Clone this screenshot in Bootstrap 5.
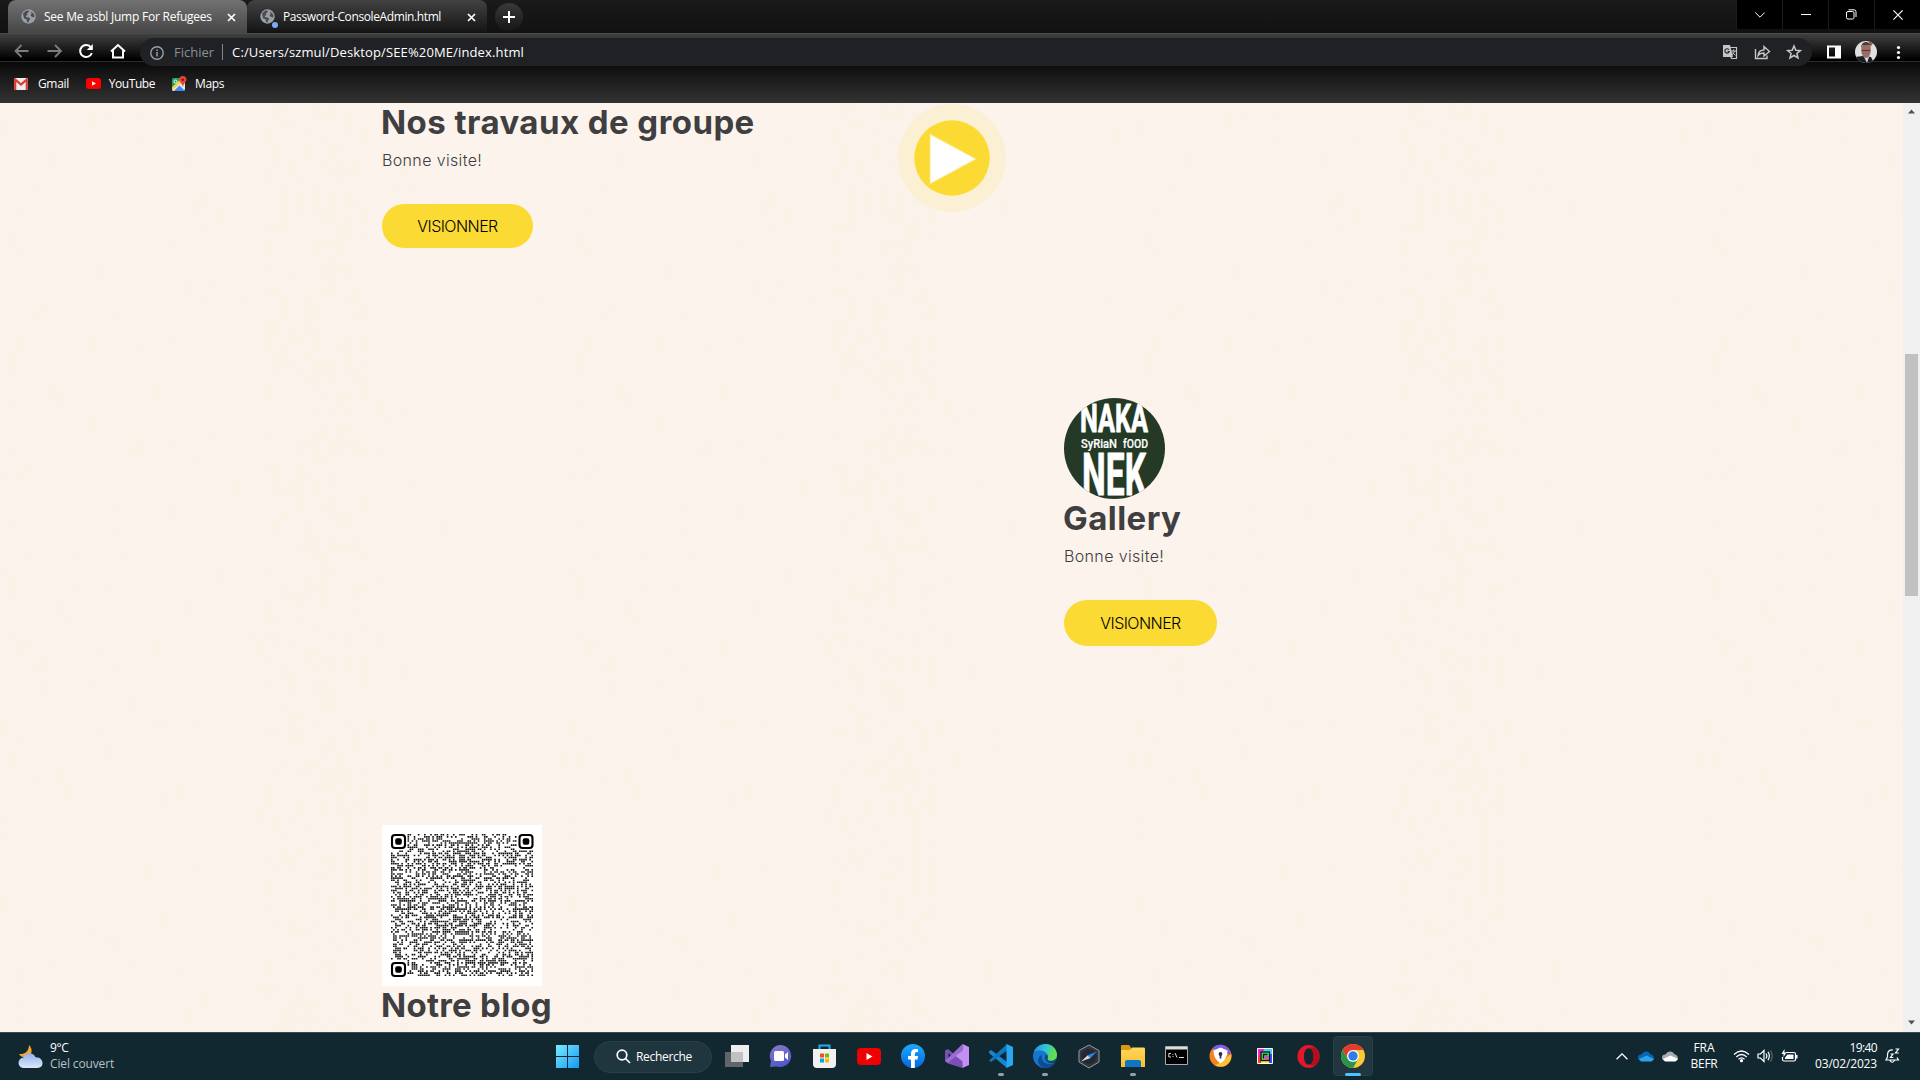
<!DOCTYPE html>
<html lang="fr">
<head>
<meta charset="utf-8">
<title>See Me asbl Jump For Refugees</title>
<link rel="stylesheet" href="https://cdn.jsdelivr.net/npm/bootstrap@5.3.0/dist/css/bootstrap.min.css">
<script src="https://cdn.jsdelivr.net/npm/bootstrap@5.3.0/dist/js/bootstrap.bundle.min.js"></script>
<style>
body{width:1920px;height:1080px;overflow:hidden;font-family:"Open Sans",sans-serif;font-size:12px;line-height:16px;background:#fcf3ec;color:#fff}
svg{display:block;flex:none}
.lbl{white-space:nowrap;flex:none}
/* browser chrome */
.tab-strip{height:33px;background:linear-gradient(#1a1a1a,#111);padding-left:8px}
.tab-item{height:33px;border-radius:8px 8px 0 0;padding-left:13px;position:relative}
.tab-on{width:239px;background:linear-gradient(#727272,#464646)}
.tab-off{width:240px;background:linear-gradient(#424242,#131313)}
.tab-title{margin-left:8px;line-height:16px}
.tab-close{position:absolute;right:11px;top:13px}
.dot-live{position:absolute;left:25px;top:22px;width:6px;height:6px;border-radius:50%;background:#7cacf8}
.new-tab{width:28px;height:28px;border-radius:50%;margin:3px 0 0 8px;background:linear-gradient(#393939,#161616)}
.win-btn{width:46px;height:29px;background:#000;border-left:1px solid #1c1c1c}
.tool-row{height:29px;background:linear-gradient(#404040,#000 95%);border-top:1px solid #4b4b4b;border-bottom:1px solid #2b2b2b}
.tool-icons{margin:2px 0 -4px 5px}
.url-bar{width:1672px;height:28px;border-radius:14px;background:#202124;margin:4px 0 -5px 5px;padding:0 10px 1px;position:relative;z-index:1}
.url-txt{font-size:13px}
.mark-row{height:41px;background:linear-gradient(#0a0a0a,#333);padding:2px 0 0 14px}
.page{height:929px;background:#fcf3ec}
.paper{position:absolute;inset:0}
.site{position:absolute;inset:0;padding-left:382px;font-family:Inter,"Open Sans",sans-serif;color:#3d3d3f}
.site h2{font-size:33px;line-height:38px;font-weight:700;margin:0 0 8px -1px;letter-spacing:.44px;color:#3f3e40;position:relative;top:1px}
.site p{font-size:16px;line-height:24px;font-weight:300;margin:0 0 32px;letter-spacing:.36px;white-space:nowrap}
.btn-see{width:151px;height:44px;border-radius:23px;background:#fbda33;color:#000;font-size:16px;font-weight:300;letter-spacing:-.55px;padding:0;border:0}
.btn-big{width:153px;height:46px}
.play{width:108px;height:108px;border-radius:50%;background:#fbf0d4;margin:2px 0 0 516px}
.scroller{width:17px;background:#f0f0f0;right:0;top:0;bottom:0}
.thumb{width:13px;height:242px;margin:251px 0 0 2px;background:#c1c1c1}
/* taskbar */
.taskbar{height:48px;background:#112831;border-top:1px solid #3b4b52;position:relative}
.cell{width:44px;height:47px;padding:0 1px 1px 0;position:relative}
.cell.run::after{content:"";position:absolute;left:19px;bottom:4px;width:6px;height:3px;border-radius:2px;background:#97a0a4}
.cell.now::before{content:"";position:absolute;left:2px;top:3px;width:40px;height:40px;border-radius:4px;background:#22363f;border:1px solid #2b3f47}
.cell.now::after{content:"";position:absolute;left:14px;bottom:4px;width:16px;height:3px;border-radius:2px;background:#4cc2ff}
.cell svg{position:relative}
.find{width:118px;height:32px;border-radius:16px;background:#20363e;border:1px solid #2a3f47;margin:0 3px 0 4px;padding-left:21px}
.meteo{width:546px;padding:0 0 1px 18px}
.tray{position:absolute;right:0;top:0;height:46px;width:320px;padding-left:16px}
</style>
</head>
<body class="d-flex flex-column">
<svg width="0" height="0" class="position-absolute"><defs>
<g id="globe"><circle cx="7.5" cy="7.5" r="7.2" fill="#9aa0a6"/><path d="M2 4.5 5 1.8 7.5 1.5 8 3 6 4.2 6.5 6 4.600 7 5.400 8.300 8 8.600 9.300 10 8 11.500 7.600 13.600 6 13 5.700 10.600 3 9.200ZM9.600 2.200 12.600 4.400 13.600 7.300 12.500 8.600 10.400 7.600 9.300 6 10.800 4.800Z" fill="#4a4c50"/></g>
<path id="cross" d="M1 1 8 8M8 1 1 8" stroke="#fff" stroke-width="1.7" fill="none"/>
<linearGradient id="win" x2="1" y2="1"><stop stop-color="#7bebff"/><stop offset="1" stop-color="#1299f5"/></linearGradient>
<linearGradient id="chat" y2="1" x2=".4"><stop stop-color="#8d79c9"/><stop offset="1" stop-color="#5059c9"/></linearGradient>
<linearGradient id="edge" x2="1" y2=".3"><stop stop-color="#1b8fe0"/><stop offset=".5" stop-color="#2fc2d8"/><stop offset="1" stop-color="#66e04a"/></linearGradient>
<linearGradient id="fb" y2="1" x2="0"><stop stop-color="#19aaff"/><stop offset="1" stop-color="#0866e0"/></linearGradient>
<linearGradient id="fold" y2="1" x2="0"><stop stop-color="#ffd65c"/><stop offset="1" stop-color="#fbbe2e"/></linearGradient>
<linearGradient id="cloud" y2="1" x2="0"><stop stop-color="#8fb0ec"/><stop offset="1" stop-color="#dce8fb"/></linearGradient>
</defs></svg>

<header>
  <div class="tab-strip d-flex">
    <div class="tab-item tab-on d-flex align-items-center"><svg width="15" height="15"><use href="#globe"/></svg><span class="tab-title lbl" style="letter-spacing:-.23px">See Me asbl Jump For Refugees</span><svg class="tab-close" width="9" height="9"><use href="#cross"/></svg></div>
    <div class="tab-item tab-off d-flex align-items-center"><svg width="15" height="15"><use href="#globe"/></svg><i class="dot-live"></i><span class="tab-title lbl" style="letter-spacing:-.39px">Password-ConsoleAdmin.html</span><svg class="tab-close" width="9" height="9"><use href="#cross"/></svg></div>
    <div class="new-tab d-flex align-items-center justify-content-center"><svg width="12" height="12"><path d="M6 0V12M0 6H12" stroke="#fff" stroke-width="2"/></svg></div>
    <div class="ms-auto d-flex">
      <div class="win-btn d-flex align-items-center justify-content-center"><svg width="10" height="6"><path d="M.3.5 5 5.200 9.700.5" fill="none" stroke="#fff"/></svg></div>
      <div class="win-btn d-flex align-items-center justify-content-center"><svg width="10" height="1"><path d="M0 .5H10" stroke="#fff"/></svg></div>
      <div class="win-btn d-flex align-items-center justify-content-center"><svg width="11" height="11" fill="none" stroke="#fff"><rect x=".5" y="2.500" width="7.500" height="7.500" rx="1.500"/><path d="M2.500.8H8A2 2 0 0 1 10 2.800V8"/></svg></div>
      <div class="win-btn d-flex align-items-center justify-content-center"><svg width="10" height="10"><path d="M.4.4 9.600 9.600M9.600.4.4 9.600" stroke="#fff" stroke-width="1.200"/></svg></div>
    </div>
  </div>
  <div class="tool-row d-flex align-items-center">
    <svg class="tool-icons" width="130" height="28" viewBox="5 38 130 28" fill="none" stroke-width="1.800">
      <path d="M28.500 52H16M21.500 46 15.500 52 21.500 58" stroke="#7d7d7d"/><path d="M47.500 52H60.500M55 46 61 52 55 58" stroke="#7d7d7d"/>
      <path d="M91 48.500A6 6 0 1 0 91.800 54" stroke="#fff" stroke-width="2"/><path d="M92.800 45V51H86.800Z" fill="#fff"/>
      <path d="M111 52.500 118 46 125 52.500M113 51.500V58.500H123V51.500" stroke="#fff" stroke-width="2"/></svg>
    <div class="url-bar d-flex align-items-center">
      <svg class="mt-1" width="14" height="16" fill="none" stroke="#9aa0a6"><circle cx="7" cy="7" r="6.200" stroke-width="1.400"/><path d="M7 6V10.500M7 3.500V5" stroke-width="1.500"/></svg>
      <span class="lbl url-txt" style="color:#8b9095;margin-left:10px">Fichier</span>
      <i class="vr" style="height:16px;align-self:center;margin:0 9px 0 8px;color:#9aa0a6;opacity:.8"></i>
      <span class="lbl url-txt" style="letter-spacing:.13px">C:/Users/szmul/Desktop/SEE%20ME/index.html</span>
      <svg class="ms-auto" width="80" height="18" viewBox="1722 43 80 18" fill="none" stroke="#c4c7c5">
        <path d="M1723 45H1730L1733 57H1723Z" fill="#c4c7c5" stroke="none"/><path d="M1730 47.500H1736.500V58.500H1731.500L1730 55" stroke-width="1.200"/><path d="M1731 51H1736M1733.500 49.500V51M1735 51 1731.500 55.500M1732.500 52.500 1735.500 55.500"/><path d="M1729 49.800A2.200 2.200 0 1 0 1729.200 51.500H1727.500" stroke="#202124" stroke-width="1.100"/>
        <path d="M1755.500 49V58.500H1767V55.500M1758 55.500C1758.500 51.500 1761 50 1764 50V46.500L1769.500 51.500 1764 56V53C1761.500 53 1759.500 53.500 1758 55.500Z" stroke-width="1.400"/>
        <path d="M1794 46 1795.800 50.300 1800.300 50.600 1796.900 53.500 1798 58 1794 55.500 1790 58 1791.100 53.500 1787.700 50.600 1792.200 50.300Z" stroke-width="1.500"/></svg>
    </div>
    <svg width="108" height="28" viewBox="1812 38 108 28" style="margin:3px 0 -5px">
      <rect x="1828" y="46.500" width="12" height="11" fill="none" stroke="#fff" stroke-width="2"/><path d="M1835 46H1841V58H1835Z" fill="#fff"/>
      <clipPath id="av"><circle cx="1866" cy="52" r="11"/></clipPath><g clip-path="url(#av)"><path d="M1855 41H1877V63H1855Z" fill="#dfe1e0"/><path d="M1855 57 1863 56 1871 57 1874 63H1855Z" fill="#1c1c24"/><path d="M1864 57 1869 57 1867 63Z" fill="#d5dae3"/><path d="M1868 41 1874 42 1871 46Z" fill="#8a5b42"/><ellipse cx="1866" cy="50.500" rx="4.800" ry="7.500" fill="#9c6c66"/><path d="M1861 48C1861 40 1871 40 1871 48L1869.500 45H1862.500Z" fill="#4b3c3c"/><path d="M1862 50.500H1870" stroke="#4f3535" stroke-width="1.200"/></g>
      <g fill="#fff"><circle cx="1898.500" cy="47.500" r="1.600"/><circle cx="1898.500" cy="52.500" r="1.600"/><circle cx="1898.500" cy="57.500" r="1.600"/></g></svg>
  </div>
  <div class="mark-row d-flex align-items-center">
    <svg width="14" height="12"><rect width="14" height="12" rx="1" fill="#eee"/><path d="M1.200 12V1.500L7 6.500 12.800 1.500V12" fill="none" stroke="#d93b32" stroke-width="2.200"/></svg><span class="lbl" style="margin:0 17px 0 10px;letter-spacing:-.35px">Gmail</span>
    <svg width="15" height="11"><rect width="15" height="11" rx="3" fill="#f00"/><path d="M6 3.200V7.800L10 5.500Z" fill="#fff"/></svg><span class="lbl" style="margin:0 17px 0 8px;letter-spacing:-.45px">YouTube</span>
    <svg width="15" height="16"><rect y="2" width="13" height="13" rx="1.500" fill="#1fa463"/><path d="M0 13.500 11.500 2H13V13L11.500 15H1Z" fill="#e8e8e8"/><path d="M2 15 7.500 9.500 13 15Z" fill="#4285f4"/><path d="M0 13 12 2" stroke="#fbd043" stroke-width="2.400"/><path d="M10.800 0A3.600 3.600 0 0 1 14.400 3.700C14.400 6 11.500 7.500 10.900 11 10.300 7.500 7.300 6 7.300 3.700A3.600 3.600 0 0 1 10.800 0Z" fill="#ea4335"/><circle cx="10.800" cy="3.700" r="1.300" fill="#7c1d14"/><circle cx="3.500" cy="5.500" r="1.500" fill="none" stroke="#fff"/></svg><span class="lbl" style="margin-left:8px;letter-spacing:-.38px">Maps</span>
  </div>
</header>

<main class="page position-relative overflow-hidden">
  <svg class="paper" id="paper" width="1903" height="929"></svg>
  <div class="site">
    <section class="d-flex" style="margin-top:-1px;height:296px">
      <div style="width:435px;margin-right:-435px" class="flex-shrink-0"><h2>Nos travaux de groupe</h2><p>Bonne visite!</p><button class="btn btn-see">VISIONNER</button></div>
      <div class="play d-flex align-items-center justify-content-center flex-shrink-0"><svg width="76" height="76" viewBox="-38 -38 76 76"><circle r="37.700" fill="#fbda33"/><path d="M-21.500-23 23 1-21.500 25Z" fill="#fff" stroke="#fff" stroke-opacity=".4" stroke-width="2"/></svg></div>
    </section>
    <section style="margin-left:682px;height:427px">
      <svg width="101" height="101" viewBox="0 0 101 101" style="margin-bottom:-1px"><clipPath id="nk"><circle cx="50.500" cy="50.500" r="50.500"/></clipPath><g clip-path="url(#nk)" fill="#fff" font-family="Roboto,sans-serif" font-weight="700" stroke="#fff" stroke-width=".9" stroke-linejoin="round"><path d="M0 0H101V101H0Z" fill="#243a26" stroke="none"/>
        <text x="16" y="34" font-size="38" textLength="68" lengthAdjust="spacingAndGlyphs">NAKA</text><text x="17" y="50" font-size="13" font-weight="500" stroke-width=".2" textLength="36" lengthAdjust="spacingAndGlyphs">SyRiaN</text><text x="59" y="50" font-size="13" font-weight="500" stroke-width=".2" textLength="25" lengthAdjust="spacingAndGlyphs">fOOD</text><text x="18" y="97" font-size="59" textLength="64" lengthAdjust="spacingAndGlyphs">NEK</text></g></svg>
      <h2>Gallery</h2><p>Bonne visite!</p><button class="btn btn-see btn-big">VISIONNER</button>
    </section>
    <section>
      <svg id="qr" width="160" height="161" viewBox="0 0 160 161" style="margin-bottom:-1px"></svg>
      <h2 style="letter-spacing:.25px">Notre blog</h2>
    </section>
  </div>
  <div class="scroller position-absolute overflow-hidden">
    <svg class="position-absolute" width="17" height="929"><path d="M5 10.500 8.500 6.500 12 10.500ZM5 917.500 8.500 921.500 12 917.500Z" fill="#505050"/></svg>
    <div class="thumb"></div>
  </div>
</main>

<footer class="taskbar d-flex align-items-center">
  <div class="meteo d-flex align-items-center flex-shrink-0"><svg width="25" height="25" viewBox="0 0 25 25"><path d="M11 1C15 5 14.500 11 9 13 5 14 2 12 1 10 7 10.500 11 7 11 1Z" fill="#f4a62a"/><path d="M6 24A5.200 5.200 0 0 1 5.500 13.500C7 8 15.500 8 17.500 13.200 26 12.500 27 24 19.500 24Z" fill="url(#cloud)"/></svg><div style="margin-left:7px"><div style="letter-spacing:-.4px">9°C</div><div style="letter-spacing:-.14px;color:#b9c1c5">Ciel couvert</div></div></div>
  <div class="cell d-flex align-items-center justify-content-center"><svg width="23" height="23" fill="url(#win)" ><path d="M0 0H11V11H0ZM12 0H23V11H12ZM0 12H11V23H0ZM12 12H23V23H12Z"/></svg></div>
  <div class="find d-flex align-items-center"><svg width="15" height="15" fill="none" stroke="#fff" stroke-width="1.700"><circle cx="6" cy="6" r="4.800"/><path d="M9.500 9.500 14 14"/></svg><span class="lbl" style="margin-left:5px;letter-spacing:-.3px">Recherche</span></div>
  <div class="cell d-flex align-items-center justify-content-center"><svg width="24" height="23"><path d="M0 7H18V22H0Z" fill="#626567"/><path d="M6 0H24V17H6Z" fill="#eee"/><path d="M6 7H18V17H6Z" fill="#bfc1c2"/></svg></div>
  <div class="cell d-flex align-items-center justify-content-center"><svg width="24" height="24"><path d="M12 1A11 11 0 1 1 8 22.500L1 23 2 17A11 11 0 0 1 12 1Z" fill="url(#chat)"/><rect x="5" y="7" width="10" height="10" rx="1.500" fill="#fff"/><path d="M16 10.500 19 8V16L16 13.500Z" fill="#fff"/></svg></div>
  <div class="cell d-flex align-items-center justify-content-center"><svg width="23" height="24"><path d="M6.500 6V1.500H16.500V6" fill="none" stroke="#22aeea" stroke-width="2"/><path d="M0 5H23V20Q23 24 19 24H4Q0 24 0 20Z" fill="#f1f1f1"/><path d="M7 9.500H11V13.500H7Z" fill="#f25022"/><path d="M12 9.500H16V13.500H12Z" fill="#7fba00"/><path d="M7 14.500H11V18.500H7Z" fill="#00a4ef"/><path d="M12 14.500H16V18.500H12Z" fill="#ffb900"/></svg></div>
  <div class="cell d-flex align-items-center justify-content-center"><svg width="24" height="17"><rect width="24" height="17" rx="4" fill="#f00000"/><path d="M9.500 5V12L15.500 8.500Z" fill="#fff"/></svg></div>
  <div class="cell d-flex align-items-center justify-content-center"><svg width="24" height="24"><circle cx="12" cy="12" r="12" fill="url(#fb)"/><path d="M10 24V15.500H7V12H10V9.500Q10 5 14.500 5H17V8H15.500Q13.800 8 13.800 9.800V12H17L16.500 15.500H13.800V24Z" fill="#fff"/></svg></div>
  <div class="cell d-flex align-items-center justify-content-center"><svg width="24" height="24"><path d="M0 6.500 3 5 18 18 17.500 24 3 19.500 0 17Z" fill="#7b4fb5"/><path d="M3.500 9V15L6.500 12Z" fill="#112831"/><path d="M0 17 17.500 0V6.500L3 19Z" fill="#9a6bd0"/><path d="M17.500 0 24 3V21L17.500 24V17.500L10.500 12 17.500 6.500Z" fill="#c48ff5"/></svg></div>
  <div class="cell run d-flex align-items-center justify-content-center"><svg width="24" height="24"><path d="M0 7.500 2 6 18 18V24L0 9Z" fill="#1389d6"/><path d="M0 16.500 18 0V6.500L2 18Z" fill="#0d78be"/><path d="M17.500 0 24 3V21L17.500 24Z" fill="#2aa7f2"/></svg></div>
  <div class="cell run d-flex align-items-center justify-content-center"><svg width="24" height="24"><circle cx="12" cy="12" r="12" fill="#1476cf"/><path d="M1 8C5-3 22-3 24 10 24.500 15 20 17.500 15.500 16.500 13.500 16 15.500 14 15 12 14 7 6 5 1 8Z" fill="url(#edge)"/><path d="M9 11C7 17 13 22 21 19.500 17 25 9 25.500 6 20 4 16 5.500 12 9 11Z" fill="#104a91"/><path d="M15.500 16.500Q20 18 23.500 14.500L24 18 21.500 19.500Q15 20 12.500 16 11 12.500 13.500 10.500 15.500 12 14.500 14.500 14.300 16 15.500 16.500Z" fill="#112831" opacity=".6"/></svg></div>
  <div class="cell d-flex align-items-center justify-content-center"><svg width="22" height="25"><path d="M11 1 21 6.500V18L11 24 1 18V6.500Z" fill="#30343e" stroke="#969ba0"/><circle cx="11" cy="12.500" r="7.500" fill="#24272f"/><path d="M9 11.500 19 7.500 12.500 14Z" fill="#2685ec"/><path d="M9.500 11.500 3 17.500 12.500 14Z" fill="#d6dbe0"/></svg></div>
  <div class="cell run d-flex align-items-center justify-content-center"><svg width="24" height="22"><path d="M0 1Q0 0 1 0H8L10 2.500V6H0Z" fill="#d99a10"/><path d="M0 5H9L11 2.500H23Q24 2.500 24 4V22H0Z" fill="url(#fold)"/><path d="M4 22V17Q4 15 6 15H18Q20 15 20 17V22Z" fill="#0f76c4"/></svg></div>
  <div class="cell d-flex align-items-center justify-content-center"><svg width="23" height="20"><path d="M.5.500H22.500V18.500H.5Z" fill="#000" stroke="#aaa"/><path d="M1 1H22V3.500H1Z" fill="#dcdcdc"/><path d="M6 7.500H3.800V11H6M8 8V8.800M8 10V11M10 7 12 11.500M14 11.500H19" fill="none" stroke="#ddd"/></svg></div>
  <div class="cell d-flex align-items-center justify-content-center"><svg width="23" height="24"><circle cx="11.500" cy="12" r="11" fill="#f58220"/><path d="M3 5C7-1 17-1 20.500 6.500L22 11 13 7Z" fill="#7a5af0"/><path d="M22.300 10C23.500 20 14 25 6 21.500L16 15Z" fill="#fbc233"/><path d="M11.500 3.500 18.500 6.500Q18.500 15 11.500 19.500 4.500 15 4.500 6.500Z" fill="#fff"/><circle cx="11.500" cy="10" r="1.900" fill="#222b52"/><path d="M11.500 10V14.500" stroke="#222b52" stroke-width="1.700"/></svg></div>
  <div class="cell d-flex align-items-center justify-content-center"><svg width="16" height="16"><rect width="16" height="16" rx="1" fill="#fff"/><path d="M1 1H8L4 8H1Z" fill="#f02ad0"/><path d="M1 8H4L6 15H1Z" fill="#ff3b30"/><path d="M8 1H15V7L12 5H5Z" fill="#3bd5f5"/><path d="M15 6V15H11L12 6Z" fill="#3a4bff"/><path d="M4 12H12V15H4Z" fill="#f7ef2a"/><rect x="4" y="4" width="8.500" height="8.500" fill="#39f05c" stroke="#111" stroke-width="1.300"/><path d="M6.500 10.500V6.500H10.500" fill="none" stroke="#111" stroke-width="1.300"/><path d="M7.500 11.500V8H11.500V11.500Z" fill="#e93cd0"/></svg></div>
  <div class="cell d-flex align-items-center justify-content-center"><svg width="23" height="23"><path fill-rule="evenodd" d="M11.500 0A11 11.300 0 1 1 11.500 22.800 11 11.300 0 1 1 11.500 0ZM11.800 3.200C8 3.200 7 8 7 11.400S8 19.600 11.800 19.600 16.500 14.800 16.500 11.400 15.500 3.200 11.800 3.200Z" fill="#e5182b"/><path d="M11.800 3.200C19 0 22.500 6 22.500 11.400S19 23 11.800 19.600C15.500 19.600 16.500 14.800 16.500 11.400S15.500 3.200 11.800 3.200Z" fill="#b10f1d"/></svg></div>
  <div class="cell now d-flex align-items-center justify-content-center"><svg width="24" height="24"><circle cx="12" cy="12" r="12" fill="#fcc934"/><path d="M1.600 6A12 12 0 0 1 22.400 6L12 6 6.800 15Z" fill="#e33b2e"/><path d="M1.600 6A12 12 0 0 0 12 24L17.200 15H6.800Z" fill="#27954a"/><circle cx="12" cy="12" r="6" fill="#fff"/><circle cx="12" cy="12" r="4.700" fill="#2b7de9"/></svg></div>

  <div class="tray d-flex align-items-center">
    <svg width="12" height="7"><path d="M.6 6.300 6 .9 11.400 6.300" fill="none" stroke="#fff" stroke-width="1.300"/></svg>
    <svg width="17" height="11" style="margin-left:10px"><path d="M3 10A3.200 3.200 0 0 1 3.500 3.500C5.500-.7 11-.5 12.300 3.200 17 4 17 10 13 10Z" fill="#0a64b8"/><path d="M3 10.500 1 8 8.500 4.500 16 8 13.500 10.500Z" fill="#2aa3ec"/></svg>
    <svg width="17" height="11" style="margin-left:7px"><path d="M3 10A3.200 3.200 0 0 1 3.500 3.500C5.500-.7 11-.5 12.300 3.200 17 4 17 10 13 10Z" fill="#a8acaf"/><path d="M3 10.500 1 8 8.500 4.500 16 8 13.500 10.500Z" fill="#fff"/></svg>
    <div class="text-center" style="width:30px;margin-left:10px"><div>FRA</div><div style="letter-spacing:-.25px">BEFR</div></div>
    <svg width="17" height="13" style="margin-left:14px" fill="none" stroke="#fff" stroke-width="1.200"><path d="M1 4.500Q8.500-2.500 16 4.500M3.300 7Q8.500 2 13.700 7M5.500 9.300Q8.500 6.500 11.500 9.300"/><circle cx="8.500" cy="10.700" r="1" fill="#fff"/></svg>
    <svg width="17" height="14" style="margin-left:7px" fill="none" stroke="#fff" stroke-width="1.200"><path d="M1 5H3.500L7 1.500V12.500L3.500 9H1ZM9 4.500Q10.700 7 9 9.500M11 2.800Q13.700 7 11 11.200"/><path d="M13.500 1.500Q17 7 13.500 12.500" stroke="#566870"/></svg>
    <svg width="17" height="14" style="margin-left:7px"><path d="M5 3.500H13Q14.500 3.500 14.500 5V10.500Q14.500 12 13 12H3Q1.500 12 1.500 10.500V8" fill="none" stroke="#fff" stroke-width="1.200"/><path d="M6.500 5.500H12.500V10H4V8.500Z" fill="#fff"/><path d="M15 6H16.500V9.500H15Z" fill="#fff"/><path d="M3.500 0 .5 5H2.500V8L5.500 3.500H3.500Z" fill="#fff"/></svg>
    <div class="text-end" style="width:64px;margin-left:15px"><div style="letter-spacing:-.6px">19:40</div><div class="lbl" style="letter-spacing:-.17px">03/02/2023</div></div>
    <svg width="15" height="16" style="margin-left:8px" fill="none" stroke="#fff" stroke-width="1.200"><path d="M8 2Q3 1.500 2.500 6.500V9L1 12H13.500L12 9.500M5 12.500Q7 16 9.500 12.500M5.500 6H8L5.500 9.500H8.300M10.500 1H13.500L10.500 5H13.800"/></svg>
  </div>
</footer>

<script>
// small deterministic generator shared by the paper grain and the code modules
function rng(s){return ()=>((s=Math.imul(s^s>>>15,s|1)+0x6D2B79F5|0)>>>8)/16777216}
// paper grain: a 568px wide tile repeated across the page
(function(){
  const r=rng(77);let d="";
  for(let y=0;y<929;y+=8)for(let x=0;x<568;x+=8){
    const band=x>256&&x<368?0.24:(x<24||(x>80&&x<120)||x>552)?0.06:x<260?0.02:x<430?0.02:0.003;
    if(r()<band){const h=r()<.4?16:8;for(let t=0;t<1903;t+=568)d+=`M${x+t} ${y}h8v${h}h-8z`}
  }
  document.getElementById("paper").innerHTML=`<path d="${d}" fill="#fbf1e5" fill-opacity=".75"/>`;
})();
// 69-module code with three finders and alignment marks
(function(){
  const n=69,u=142.5/n,o=9,r=rng(4242),al=[6,34,62];let d="";
  const inFinder=(x,y)=>(x<8&&y<8)||(x>n-9&&y<8)||(x<8&&y>n-9);
  for(let y=0;y<n;y++)for(let x=0;x<n;x++){
    let on=r()<.48;
    if(inFinder(x,y))continue;
    for(const a of al)for(const b of al){const m=Math.max(Math.abs(x-a),Math.abs(y-b));if(m<3&&!inFinder(a,b))on=m!==1}
    if(on)d+=`M${(o+x*u).toFixed(2)} ${(o+y*u).toFixed(2)}h1.6v1.6h-1.6z`;
  }
  const f=(x,y)=>`<rect x="${x+1}" y="${y+1}" width="13" height="13" rx="3" fill="none" stroke="#000" stroke-width="2.100"/><rect x="${x+4.2}" y="${y+4.2}" width="6.600" height="6.600" rx="2"/>`;
  document.getElementById("qr").innerHTML=`<path d="M0 0H160V161H0Z" fill="#fff"/><path d="${d}" fill="#111"/>`+f(9,9)+f(136.5,9)+f(9,137);
})();
</script>
</body>
</html>
